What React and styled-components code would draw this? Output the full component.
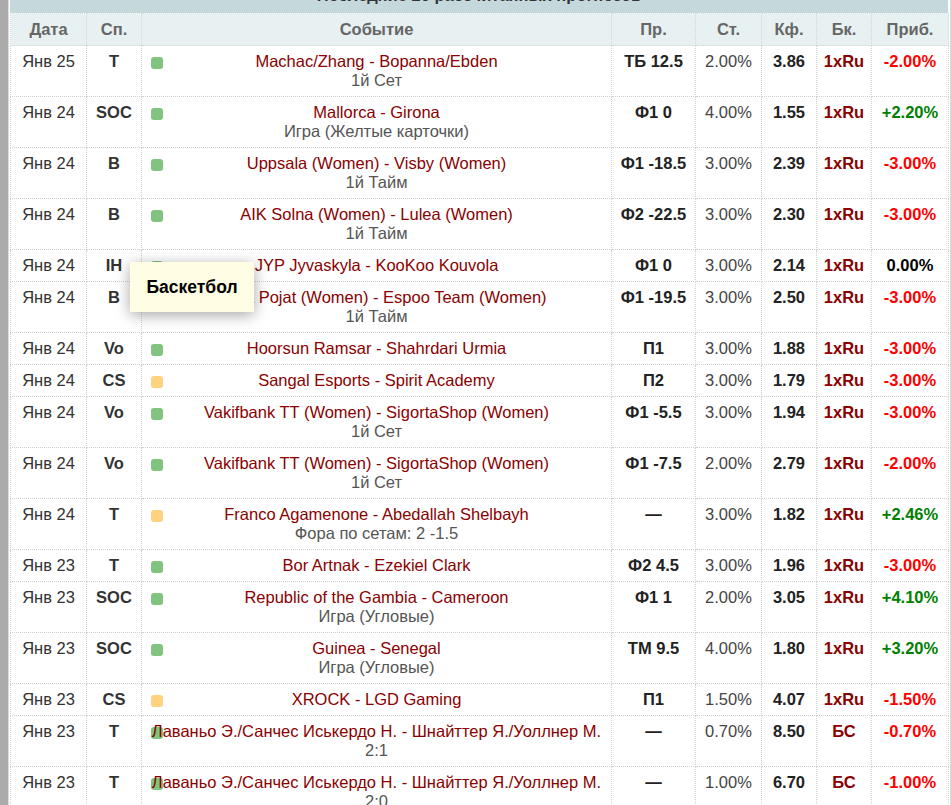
import React from 'react';
import styled, { createGlobalStyle } from 'styled-components';

const rows = [
  ['Янв 25', 'T', 'g', 'Machac/Zhang - Bopanna/Ebden', '1й Сет', 'ТБ 12.5', '2.00%', '3.86', '1xRu', '-2.00%'],
  ['Янв 24', 'SOC', 'g', 'Mallorca - Girona', 'Игра (Желтые карточки)', 'Ф1 0', '4.00%', '1.55', '1xRu', '+2.20%'],
  ['Янв 24', 'B', 'g', 'Uppsala (Women) - Visby (Women)', '1й Тайм', 'Ф1 -18.5', '3.00%', '2.39', '1xRu', '-3.00%'],
  ['Янв 24', 'B', 'g', 'AIK Solna (Women) - Lulea (Women)', '1й Тайм', 'Ф2 -22.5', '3.00%', '2.30', '1xRu', '-3.00%'],
  ['Янв 24', 'IH', 'g', 'JYP Jyvaskyla - KooKoo Kouvola', '', 'Ф1 0', '3.00%', '2.14', '1xRu', '0.00%'],
  ['Янв 24', 'B', 'g', 'Honka Pojat (Women) - Espoo Team (Women)', '1й Тайм', 'Ф1 -19.5', '3.00%', '2.50', '1xRu', '-3.00%', 'Баскетбол'],
  ['Янв 24', 'Vo', 'g', 'Hoorsun Ramsar - Shahrdari Urmia', '', 'П1', '3.00%', '1.88', '1xRu', '-3.00%'],
  ['Янв 24', 'CS', 'y', 'Sangal Esports - Spirit Academy', '', 'П2', '3.00%', '1.79', '1xRu', '-3.00%'],
  ['Янв 24', 'Vo', 'g', 'Vakifbank TT (Women) - SigortaShop (Women)', '1й Сет', 'Ф1 -5.5', '3.00%', '1.94', '1xRu', '-3.00%'],
  ['Янв 24', 'Vo', 'g', 'Vakifbank TT (Women) - SigortaShop (Women)', '1й Сет', 'Ф1 -7.5', '2.00%', '2.79', '1xRu', '-2.00%'],
  ['Янв 24', 'T', 'y', 'Franco Agamenone - Abedallah Shelbayh', 'Фора по сетам: 2 -1.5', '—', '3.00%', '1.82', '1xRu', '+2.46%'],
  ['Янв 23', 'T', 'g', 'Bor Artnak - Ezekiel Clark', '', 'Ф2 4.5', '3.00%', '1.96', '1xRu', '-3.00%'],
  ['Янв 23', 'SOC', 'g', 'Republic of the Gambia - Cameroon', 'Игра (Угловые)', 'Ф1 1', '2.00%', '3.05', '1xRu', '+4.10%'],
  ['Янв 23', 'SOC', 'g', 'Guinea - Senegal', 'Игра (Угловые)', 'ТМ 9.5', '4.00%', '1.80', '1xRu', '+3.20%'],
  ['Янв 23', 'CS', 'y', 'XROCK - LGD Gaming', '', 'П1', '1.50%', '4.07', '1xRu', '-1.50%'],
  ['Янв 23', 'T', 'g', 'Лаваньо Э./Санчес Иськердо Н. - Шнайттер Я./Уоллнер М.', '2:1', '—', '0.70%', '8.50', 'БС', '-0.70%'],
  ['Янв 23', 'T', 'g', 'Лаваньо Э./Санчес Иськердо Н. - Шнайттер Я./Уоллнер М.', '2:0', '—', '1.00%', '6.70', 'БС', '-1.00%'],
];

const widths = [76, 55, 470, 84, 66, 55, 55, 77];
const heads = ['Дата', 'Сп.', 'Событие', 'Пр.', 'Ст.', 'Кф.', 'Бк.', 'Приб.'];

const profitKind = v => (v.startsWith('+') ? 'up' : v.startsWith('-') ? 'down' : 'zero');

export default function App() {
  return (
    <StPage>
      <GlobalStyle />
      <StPanel>
        <StTitle>Последние 20 рассчитанных прогнозов</StTitle>
        <StTable>
          <colgroup>
            {widths.map((w, i) => <col key={i} style={{ width: w }} />)}
          </colgroup>
          <thead>
            <tr>
              {heads.map(h => <StHead key={h}>{h}</StHead>)}
            </tr>
          </thead>
          <tbody>
            {rows.map((r, i) => (
              <tr key={i}>
                <StCell>{r[0]}</StCell>
                <StSportCell>
                  {r[1]}
                  {r[10] && <StTooltip>{r[10]}</StTooltip>}
                </StSportCell>
                <StEventCell>
                  <StMark kind={r[2]} />
                  <StEventLink>{r[3]}</StEventLink>
                  {r[4] && <StSub>{r[4]}</StSub>}
                </StEventCell>
                <StBold>{r[5]}</StBold>
                <StStake>{r[6]}</StStake>
                <StBold>{r[7]}</StBold>
                <StBook>{r[8]}</StBook>
                <StProfit kind={profitKind(r[9])}>{r[9]}</StProfit>
              </tr>
            ))}
          </tbody>
        </StTable>
      </StPanel>
    </StPage>
  );
}

const GlobalStyle = createGlobalStyle`
  body {
    margin: 0;
    background: #fff;
    font-family: "Liberation Sans", Arial, sans-serif;
  }
`;

const StPage = styled.div`
  border-left: 8px solid #ababab;
  min-height: 805px;
  overflow: hidden;
  box-sizing: border-box;
`;

const StPanel = styled.div`
  width: 940px;
  border-left: 1px solid #dcdcdc;
  border-right: 1px solid #dcdcdc;
  padding: 0 0 0 1px;
  box-sizing: content-box;
`;

const StTitle = styled.div`
  margin-top: -19px;
  height: 32px;
  line-height: 28px;
  background: #c5d8dc;
  color: #333;
  font-size: 16.5px;
  font-weight: bold;
  text-align: center;
  width: 938px;
  overflow: hidden;
`;

const StTable = styled.table`
  width: 938px;
  border-collapse: collapse;
  table-layout: fixed;
  font-size: 16.5px;
  line-height: 19px;
`;

const StHead = styled.th`
  background: #e8f1f2;
  color: #666;
  font-weight: bold;
  height: 31px;
  padding: 0;
  text-align: center;
  border: 1px dotted #cfd7d8;
  border-top: 1px dotted #d8e0e1;
`;

const StCell = styled.td`
  padding: 6px 2px 6px;
  text-align: center;
  vertical-align: top;
  color: #333;
  border: 1px dotted #d0d0d0;
  white-space: nowrap;
`;

const StSportCell = styled(StCell)`
  position: relative;
  font-weight: bold;
  color: #333;
`;

const StEventCell = styled(StCell)`
  position: relative;
`;

const StMark = styled.span`
  position: absolute;
  left: 9px;
  top: 11px;
  width: 12px;
  height: 12px;
  border-radius: 3px;
  background: ${p => (p.kind === 'y' ? '#ffd27f' : '#7fc47f')};
`;

const StEventLink = styled.div`
  position: relative;
  color: #8b0000;
`;

const StSub = styled.div`
  color: #555;
`;

const StBold = styled(StCell)`
  font-weight: bold;
  color: #222;
`;

const StStake = styled(StCell)`
  color: #444;
`;

const StBook = styled(StCell)`
  font-weight: bold;
  color: #8b0000;
`;

const StProfit = styled(StCell)`
  font-weight: bold;
  color: ${p => (p.kind === 'up' ? '#008000' : p.kind === 'down' ? '#ff0000' : '#000')};
`;

const StTooltip = styled.div`
  position: absolute;
  left: 43px;
  top: -20px;
  width: 124px;
  height: 50px;
  box-sizing: border-box;
  line-height: 50px;
  font-size: 17.5px;
  background: #fffde3;
  color: #000;
  font-weight: bold;
  text-align: center;
  box-shadow: 0 3px 14px rgba(0, 0, 0, 0.35);
  z-index: 2;
`;
